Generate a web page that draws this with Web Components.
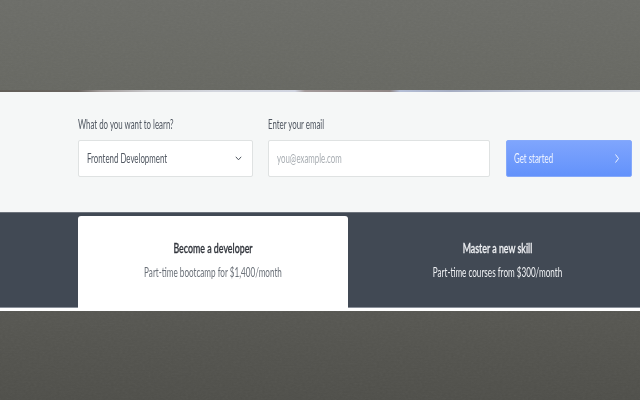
<!DOCTYPE html>
<html>
<head>
<meta charset="utf-8">
<title>Signup</title>
<style>
html, body { margin: 0; height: 400px; overflow: hidden; }
body {
    font-family: "Lato", "Liberation Sans", sans-serif;
    background: linear-gradient(#6c6d68 0, #676862 90px, #575752 311px, #4f4f4a 400px);
}
</style>
</head>
<body>
<photo-grain></photo-grain>
<signup-page>
    <signup-form></signup-form>
    <offer-band>
        <offer-tab active heading="Become a developer" detail="Part-time bootcamp for $1,400/month"></offer-tab>
        <offer-tab heading="Master a new skill" detail="Part-time courses from $300/month"></offer-tab>
    </offer-band>
</signup-page>

<script>
// the photo behind the page is only a faint grain over the body gradient
class PhotoGrain extends HTMLElement {
    constructor() {
        super();
        this.attachShadow({mode: 'open'}).innerHTML = `
        <style>
            :host { position: absolute; left: 0; top: 0; width: 640px; height: 400px; opacity: .05; }
            svg { display: block; }
        </style>
        <svg width="640" height="400">
            <filter id="grain"><feTurbulence type="fractalNoise" baseFrequency=".35 .6" numOctaves="2" seed="4"/><feColorMatrix type="saturate" values="0"/></filter>
            <rect width="640" height="400" filter="url(#grain)"/>
        </svg>`;
    }
}

class SignupPage extends HTMLElement {
    constructor() {
        super();
        this.attachShadow({mode: 'open'}).innerHTML = `
        <style>
            :host { display: block; position: relative; padding: 90px 0 89px; }
            .edge {
                height: 2px;
                background: linear-gradient(90deg, #625e58 0, #6a6560 78px, #a09a98 100px, #c9c9cc 150px, #d3d6de 215px, #d0d4e0 295px, #a39a9a 305px, #8f8685 390px, #b4bed6 400px, #a5adc2 450px, #c3c9d8 530px, #d8dce4 640px);
            }
            .line { height: 3px; background: #fff; }
        </style>
        <div class="edge"></div>
        <slot></slot>
        <div class="line"></div>`;
    }
}

class SignupForm extends HTMLElement {
    constructor() {
        super();
        this.attachShadow({mode: 'open'}).innerHTML = `
        <style>
            :host {
                display: grid;
                grid-template-columns: 175px 222px 127px;
                column-gap: 15px;
                height: 120px;
                box-sizing: border-box;
                padding: 26px 7px 0 78px;
                background: #f5f7f7;
                font-size: 12.500px;
                color: #505761;
            }
            label { display: block; height: 22px; line-height: 13px; white-space: nowrap; transform: scaleX(.63); transform-origin: left; }
            .box {
                display: flex;
                align-items: center;
                justify-content: space-between;
                height: 37px;
                box-sizing: border-box;
                padding: 0 10px 0 8px;
                background: #fff;
                border: 1px solid #dfe2e2;
                border-radius: 2px;
                white-space: nowrap;
            }
            .text { transform: scaleX(.63); transform-origin: left; }
            .hint { color: #a9aeb3; }
            .go {
                margin: 22px 0 0 1px;
                padding: 0 12px 0 7px;
                border: 1px solid #85a9fb;
                color: #eef3ff;
                background: linear-gradient(#7fa5fd, #6392fb);
            }
            svg { display: block; fill: none; stroke: currentColor; }
        </style>
        <div>
            <label>What do you want to learn?</label>
            <div class="box">
                <span class="text">Frontend Development</span>
                <svg width="7" height="5" viewBox="0 0 7 5" stroke-width="1"><path d="M.8.800l2.700 3 2.700-3"/></svg>
            </div>
        </div>
        <div>
            <label>Enter your email</label>
            <div class="box"><span class="text hint">you@example.com</span></div>
        </div>
        <div class="box go">
            <span class="text">Get started</span>
            <svg width="4" height="9" viewBox="0 0 4 9" stroke-width="1"><path d="M.5.500l3 4-3 4"/></svg>
        </div>`;
    }
}

class OfferBand extends HTMLElement {
    constructor() {
        super();
        this.attachShadow({mode: 'open'}).innerHTML = `
        <style>
            :host {
                display: grid;
                grid-template-columns: 270px 299px;
                height: 96px;
                box-sizing: border-box;
                padding: 3px 0 0 78px;
                background: #414954;
                border-top: 1px solid #6d737c;
                border-bottom: 1px solid #8a909a;
            }
        </style>
        <slot></slot>`;
    }
}

class OfferTab extends HTMLElement {
    constructor() {
        super();
        this.attachShadow({mode: 'open'}).innerHTML = `
        <style>
            :host {
                display: block;
                padding-top: 25px;
                margin-bottom: -1px;
                text-align: center;
                font-size: 13px;
                line-height: 14px;
                color: #eef0f3;
            }
            :host([active]) { background: #fff; border-radius: 3px 3px 0 0; color: #6a7078; }
            :host([active]) h3 { color: #30343b; }
            h3 { margin: 0 0 10px; font: inherit; font-weight: 500; -webkit-text-stroke: .3px currentColor; transform: scaleX(.68); }
            p { margin: 0; transform: scaleX(.625); }
        </style>
        <h3></h3>
        <p></p>`;
    }

    connectedCallback() {
        this.shadowRoot.querySelector('h3').textContent = this.getAttribute('heading');
        this.shadowRoot.querySelector('p').textContent = this.getAttribute('detail');
    }
}

customElements.define("photo-grain", PhotoGrain);
customElements.define("signup-page", SignupPage);
customElements.define("signup-form", SignupForm);
customElements.define("offer-band", OfferBand);
customElements.define("offer-tab", OfferTab);
</script>
</body>
</html>
